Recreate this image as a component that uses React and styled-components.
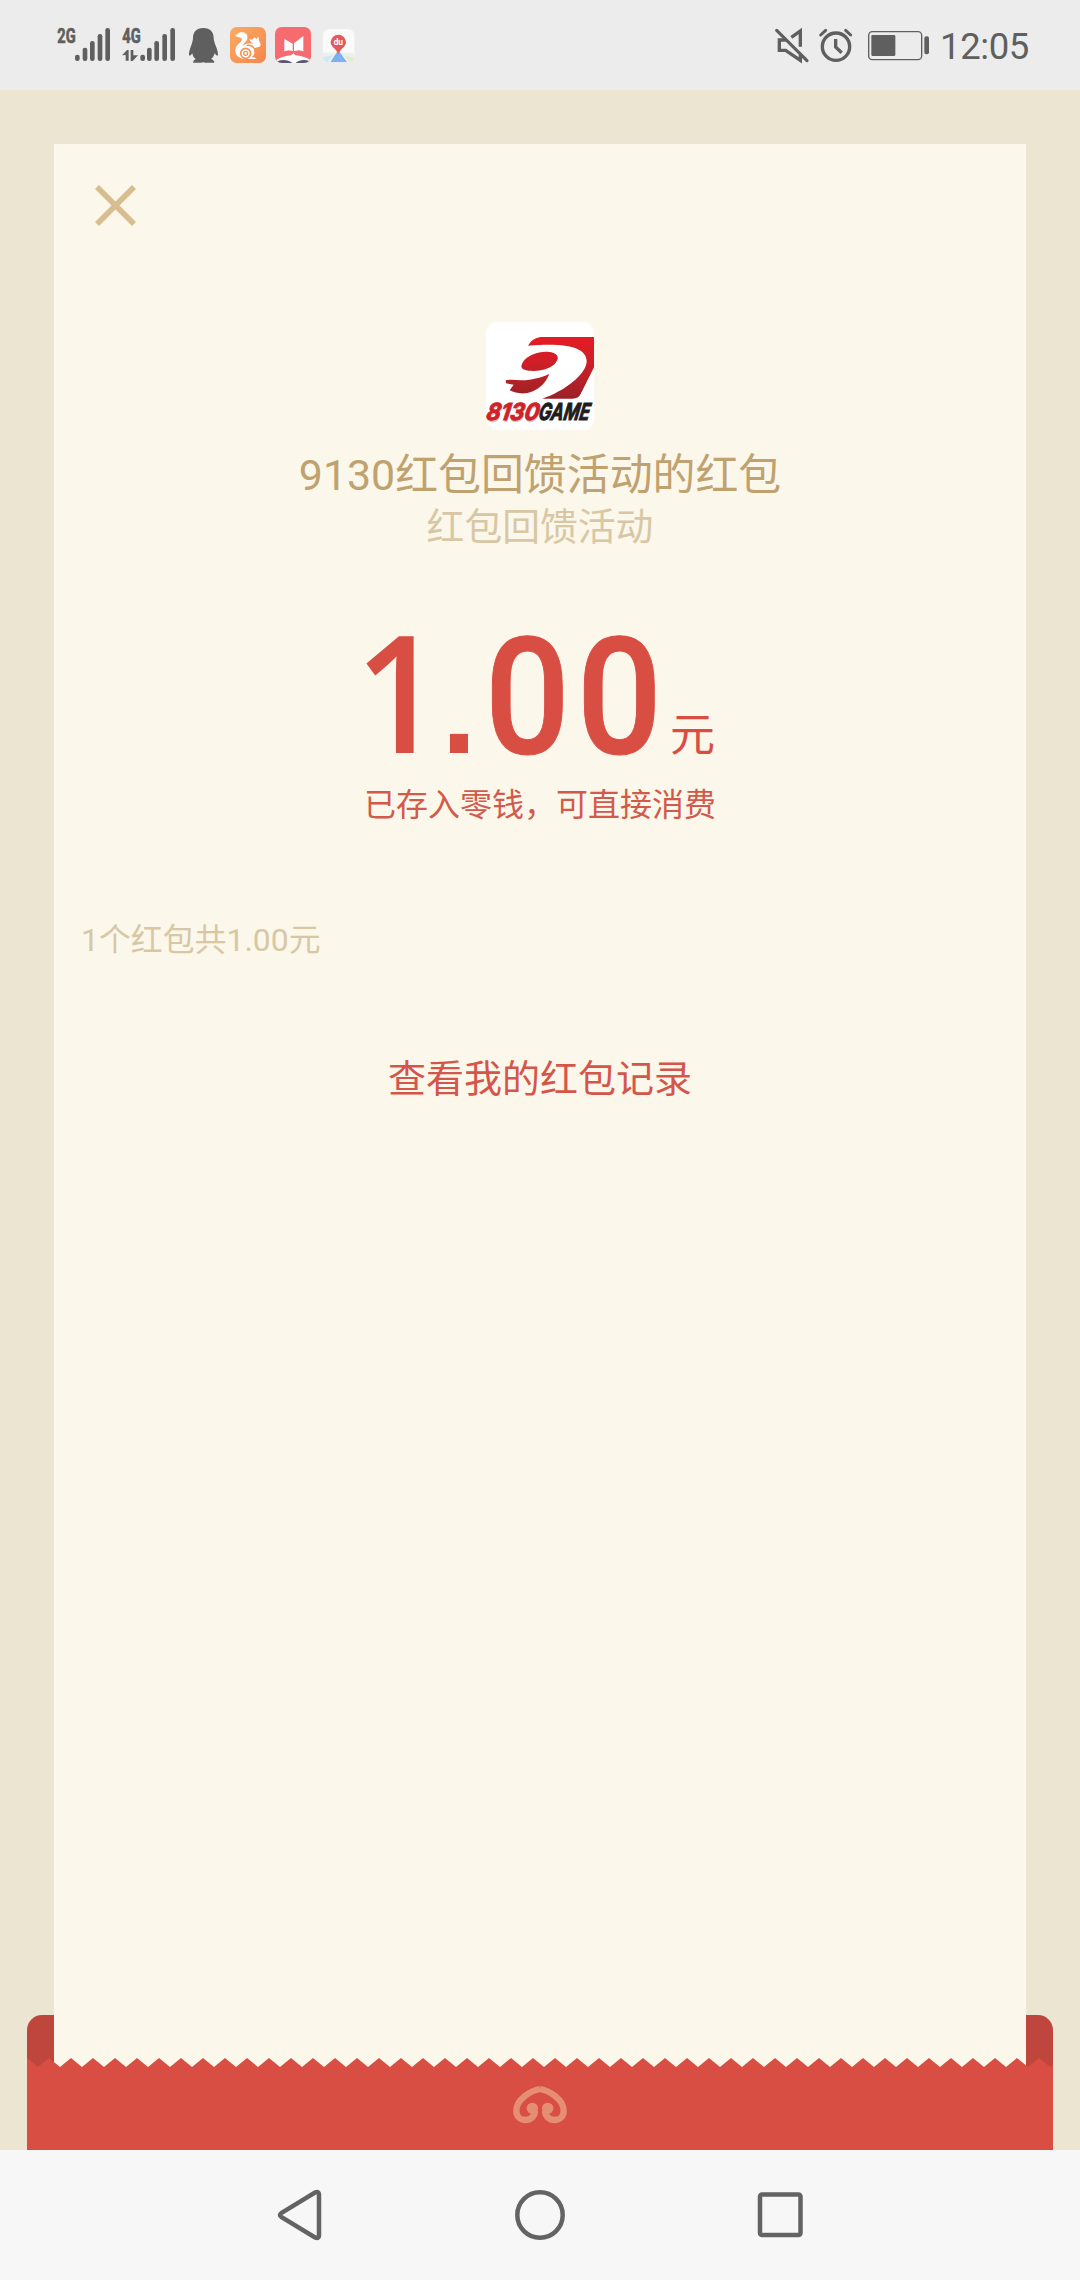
import styled, { createGlobalStyle } from 'styled-components';

const GlobalStyle = createGlobalStyle`
  * {
    box-sizing: border-box;
  }

  body {
    margin: 0;
    background: #ece5d2;
    font-family: Roboto, 'Noto Sans CJK SC', sans-serif;
  }

  svg {
    display: block;
    flex: none;
    overflow: visible;
  }
`;

const Screen = styled.div`
  display: flex;
  flex-direction: column;
  width: 1080px;
  height: 2280px;
  overflow: hidden;
`;

/* status bar */

const StatusBar = styled.header`
  display: flex;
  justify-content: space-between;
  height: 90px;
  padding: 27px 51px 0 56px;
  background: #ececec;
  color: #5f5f5f;
`;

const StatusGroup = styled.div`
  display: flex;
  align-items: flex-start;
  gap: ${({ gap }) => gap}px;
`;

const Clock = styled.span`
  margin-top: -2px;
  font-size: 36.5px;
  line-height: 43px;
  letter-spacing: -0.4px;
`;

/* envelope: the card sits between the back pocket and the front flap */

const Envelope = styled.main`
  flex: 1;
  display: grid;
  grid-template-columns: 27px 27px 1fr 27px 27px;
  grid-template-rows: 54px 1fr 43px 92px;
`;

const Pocket = styled.div`
  grid-column: 2 / 5;
  grid-row: 3 / 5;
  border-radius: 15px 15px 0 0;
  background: #bf463d;
`;

const Card = styled.section`
  grid-column: 3;
  grid-row: 2 / 5;
  display: flex;
  flex-direction: column;
  align-items: center;
  background: #fbf7ea;
`;

const TOOTH = 22;
const teeth = Array.from({ length: 95 }, (_, i) => {
  const x = (i * TOOTH) / 2;
  return `${x}px ${i % 2 ? 9 : 0}px`;
}).join(', ');

const Flap = styled.div`
  grid-column: 2 / 5;
  grid-row: 4;
  display: flex;
  justify-content: center;
  padding-top: 26px;
  background: #d94e43;
  clip-path: polygon(${teeth}, 100% 100%, 0 100%);
`;

const CloseButton = styled.button`
  align-self: flex-start;
  margin: 41px 0 0 41px;
  padding: 0;
  border: none;
  background: none;
  color: #d8bd90;
`;

const Avatar = styled.div`
  width: 108px;
  height: 108px;
  margin-top: 96px;
  border-radius: 11px;
  background: #fff;
`;

const Title = styled.h1`
  margin: 18px 0 0;
  color: #bfa270;
  font-size: 42.9px;
  font-weight: 400;
  line-height: 54px;
  white-space: nowrap;
`;

const Wishing = styled.p`
  margin: 0;
  color: #d8c7a5;
  font-size: 37.8px;
  line-height: 50px;
`;

const Amount = styled.div`
  display: flex;
  align-items: baseline;
  height: 160px;
  margin-top: 58px;
  color: #d94e43;
  line-height: 160px;
`;

const Glyph = styled.span`
  display: inline-block;
  width: ${({ width }) => width}px;
  margin-left: ${({ kern = 0 }) => kern}px;
  font-family: ${({ font = 'Roboto' }) => `'${font}'`}, sans-serif;
  font-size: ${({ size = 163 }) => size}px;
  font-weight: ${({ weight = 500 }) => weight};
  text-align: center;
  transform: scaleX(${({ stretch = 1 }) => stretch});
  transform-origin: ${({ origin = 'center' }) => origin};
  -webkit-text-stroke: ${({ outline = 0 }) => outline}px currentColor;
`;

const Unit = styled.span`
  margin-left: 5px;
  font-size: 45px;
  transform: translateY(-2px);
`;

const Deposit = styled.p`
  margin: 13px 0 0;
  color: #d25a4b;
  font-size: 32px;
  line-height: 44px;
`;

const Summary = styled.p`
  align-self: flex-start;
  margin: 91px 0 0 27px;
  color: #d8c7a5;
  font-size: 31.9px;
  line-height: 44px;
`;

const RecordsLink = styled.a`
  margin-top: 92px;
  color: #d4564a;
  font-size: 38px;
  line-height: 50px;
`;

const NavBar = styled.nav`
  display: flex;
  justify-content: center;
  align-items: center;
  gap: 190px;
  height: 130px;
  background: #f7f7f7;
  color: #636363;
`;

function Signal({ label, xs, arrows }) {
  const tops = [134, 113, 93, 72, 54];
  return (
    <svg width="56" height="36" viewBox="0 51 168 108" fill="currentColor">
      <text
        x="4"
        y="98"
        fontFamily="Roboto"
        fontWeight="700"
        fontSize="60"
        stroke="currentColor"
        strokeWidth="2"
        textLength="55"
        lengthAdjust="spacingAndGlyphs"
      >
        {label}
      </text>
      {xs.map((x, i) => (
        <rect key={x} x={x - 7} y={tops[i]} width="14" height={153 - tops[i]} rx="6.5" />
      ))}
      {arrows && <path d="M3 136 18 120h5v32h-9v-17zM29 120h8v16h14l-16 17h-6z" />}
    </svg>
  );
}

function QQ() {
  return (
    <svg width="35" height="36" viewBox="438 51 105 108" fill="currentColor">
      <path d="M490 54c-22 0-31 14-31 30 0 14-12 34-12 48 0 8 4 6 10-2 1 8 5 14 10 17q-8 3-8 11h25q6-3 12 0h27q0-8-10-11c5-3 9-9 11-17 6 8 10 10 10 2 0-14-13-34-13-48 0-16-9-30-31-30z" />
    </svg>
  );
}

function UCBrowser() {
  return (
    <svg width="36" height="36" viewBox="570 51 108 108">
      <defs>
        <linearGradient id="uc" x1="0" y1="0" x2="1" y2="1">
          <stop offset="0" stopColor="#fbaa62" />
          <stop offset="1" stopColor="#f5864f" />
        </linearGradient>
      </defs>
      <rect x="570" y="51" width="108" height="108" rx="20" fill="url(#uc)" />
      <path
        fill="#fff"
        d="M586 75c7 0 8-8 18-8 14 0 20 8 18 19-2 9-12 14-16 23 10-9 26-12 34-7-4-6-10-7-12-14 7 3 13 0 14-7l7 6 6-7c3 7 1 12 5 18 3 6 3 9-2 12-7 3-12 1-15 6-3 6 2 10-1 17-1 5-5 7-8 8q12 0 14 6h-30c-15 1-33-8-32-27 1-17 17-20 19-29 1-6-1-8-8-9-6-1-10-3-11-7z"
      />
      <circle cx="617" cy="130" r="15" fill="none" stroke="#f79255" strokeWidth="5" />
      <circle cx="617" cy="130" r="6" fill="none" stroke="#f79255" strokeWidth="4" />
      <path d="M620 106q18-2 24 12" fill="none" stroke="#f79255" strokeWidth="4" />
    </svg>
  );
}

function Reader() {
  return (
    <svg width="36" height="36" viewBox="705 51 108 108">
      <clipPath id="reader">
        <rect x="705" y="51" width="108" height="108" rx="20" />
      </clipPath>
      <g clipPath="url(#reader)">
        <path fill="#f56b70" d="M705 51h108v108H705z" />
        <path
          fill="#fff"
          d="M733 87l25 14v22l-12-2-13 3zM762 100l28-22v46l-12-3-16 2zM708 151c14-10 31-14 46-15l6-6 6 6c15 1 32 5 46 15l-12 10h-80z"
        />
        <path fill="#5d5872" d="M713 153c14-6 34-4 44 6h-40zM808 153c-14-6-32-4-41 6h38z" />
      </g>
    </svg>
  );
}

function BaiduMap() {
  return (
    <svg width="35" height="36" viewBox="840 51 105 108">
      <clipPath id="baidu">
        <rect x="848" y="57" width="96" height="100" rx="20" />
      </clipPath>
      <g clipPath="url(#baidu)">
        <path fill="#fafafa" d="M848 57h96v100h-96z" />
        <path fill="#eef0ee" d="M848 128h96v29h-96z" />
        <path fill="#cbe9f7" d="M848 141l30-5-15 21h-15z" />
        <path fill="#dcefc9" d="M913 136l31 8v13h-16z" />
        <path fill="#7db1f2" d="M891 126h8l22 31h-50z" />
        <path fill="#e25b59" d="M895 74a23 23 0 0 1 23 23c0 14-18 20-23 36-5-16-23-22-23-36a23 23 0 0 1 23-23z" />
        <text x="881" y="104" fontFamily="Roboto" fontWeight="700" fontSize="25" fill="#fff">
          du
        </text>
      </g>
    </svg>
  );
}

function Muted() {
  return (
    <svg width="34" height="36" viewBox="48 51 102 108" fill="none" stroke="currentColor">
      <path strokeWidth="10" d="M97 82l27-19v47M80 90H61v31h19l44 30v-17" />
      <path strokeWidth="9.5" strokeLinecap="round" d="M53 61l91 91" />
    </svg>
  );
}

function Alarm() {
  return (
    <svg width="39" height="36" viewBox="179 51 117 108" fill="none" stroke="currentColor">
      <circle cx="230" cy="110" r="41" strokeWidth="10" />
      <path strokeWidth="10" d="M229 87v24l18 17" />
      <path strokeWidth="9" strokeLinecap="round" d="M184 75l15-14M259 61l15 14" />
    </svg>
  );
}

function Battery() {
  return (
    <svg width="62" height="36" viewBox="326 51 186 108">
      <rect x="328" y="65" width="159" height="84" rx="11" fill="none" stroke="currentColor" strokeWidth="4" />
      <rect x="336" y="75" width="72" height="63" rx="4" fill="currentColor" />
      <rect x="495" y="79" width="14" height="54" rx="6" fill="currentColor" />
    </svg>
  );
}

function GameLogo() {
  return (
    <svg width="108" height="108" viewBox="48 36 324 324">
      <defs>
        <linearGradient id="red" gradientUnits="userSpaceOnUse" x1="0" y1="81" x2="0" y2="266">
          <stop offset="0" stopColor="#e51b24" />
          <stop offset="0.4" stopColor="#d01f27" />
          <stop offset="1" stopColor="#9a2226" />
        </linearGradient>
      </defs>
      <g fill="url(#red)">
        <path d="M174 107Q186 84 212 81H372V172L332 252Q325 266 308 266H217C285 243 350 192 350 153 350 112 288 97 174 107z" />
        <path d="M154 169C158 142 195 125 232 125 254 125 268 136 262 150 252 173 220 183 190 183 168 183 155 179 154 169z" />
        <path d="M107 211C125 207 150 213 178 209 205 205 222 199 238 192 226 222 202 243 172 249 152 252 134 249 119 241L131 224 108 220z" />
      </g>
      <g
        fontFamily="Inter"
        fontWeight="700"
        fontStyle="italic"
        fontSize="70"
        strokeWidth="3"
        transform="translate(56) skewX(-10)"
      >
        <text x="52" y="336" fill="#cfcfcf" textLength="156" lengthAdjust="spacingAndGlyphs">
          8130
        </text>
        <text x="49" y="331" fill="#cf2229" stroke="#cf2229" textLength="158" lengthAdjust="spacingAndGlyphs">
          8130
        </text>
        <text x="206" y="331" fill="#1d1d1d" stroke="#1d1d1d" textLength="153" lengthAdjust="spacingAndGlyphs">
          GAME
        </text>
      </g>
    </svg>
  );
}

function Curl() {
  const half = 'M180 147C152 152 109 178 109 212 109 231 122 240 136 240 152 240 165 228 165 212';
  return (
    <svg width="56" height="40" viewBox="96 132 168 120" fill="none" stroke="#e68e73" strokeWidth="19">
      {[undefined, 'matrix(-1 0 0 1 360 0)'].map((transform, i) => (
        <g key={i} transform={transform}>
          <path d={half} strokeLinejoin="round" />
          <circle cx="157" cy="205" r="17" fill="#e68e73" stroke="none" />
        </g>
      ))}
    </svg>
  );
}

export default function App() {
  return (
    <Screen>
      <GlobalStyle />
      <StatusBar>
        <StatusGroup gap={9}>
          <Signal label="2G" xs={[64, 87, 109, 132, 155]} />
          <Signal label="4G" xs={[65, 85, 107, 131, 155]} arrows />
          <QQ />
          <UCBrowser />
          <Reader />
          <BaiduMap />
        </StatusGroup>
        <StatusGroup gap={10}>
          <Muted />
          <Alarm />
          <Battery />
          <Clock>12:05</Clock>
        </StatusGroup>
      </StatusBar>

      <Envelope>
        <Pocket />
        <Card>
          <CloseButton aria-label="关闭">
            <svg width="41" height="41" viewBox="0 0 41 41" stroke="currentColor" strokeWidth="5.6">
              <path d="M2 2l37 37M39 2L2 39" />
            </svg>
          </CloseButton>
          <Avatar>
            <GameLogo />
          </Avatar>
          <Title>9130红包回馈活动的红包</Title>
          <Wishing>红包回馈活动</Wishing>
          <Amount>
            <Glyph font="Open Sans" weight={600} width={82} kern={-10} stretch={0.94} origin="left">
              1
            </Glyph>
            <Glyph font="Liberation Sans" weight={700} size={128} width={44}>
              .
            </Glyph>
            <Glyph width={92} stretch={0.92} outline={1}>
              0
            </Glyph>
            <Glyph width={92} stretch={0.92} outline={1}>
              0
            </Glyph>
            <Unit>元</Unit>
          </Amount>
          <Deposit>已存入零钱，可直接消费</Deposit>
          <Summary>1个红包共1.00元</Summary>
          <RecordsLink>查看我的红包记录</RecordsLink>
        </Card>
        <Flap>
          <Curl />
        </Flap>
      </Envelope>

      <NavBar>
        <svg width="48" height="50" viewBox="-1 0 48 50" fill="none" stroke="currentColor" strokeWidth="4.5">
          <path d="M3.2 23.2 37 2.6q4-1.6 4 2v40.8q0 3.6-4 2L3.2 26.8q-2.4-1.8 0-3.6z" />
        </svg>
        <svg width="50" height="50" viewBox="0 0 50 50" fill="none" stroke="currentColor" strokeWidth="4.5">
          <circle cx="25" cy="25" r="22.7" />
        </svg>
        <svg width="48" height="50" viewBox="0 0 48 50" fill="none" stroke="currentColor" strokeWidth="4.5">
          <rect x="5" y="4.5" width="40.5" height="40.5" rx="2" />
        </svg>
      </NavBar>
    </Screen>
  );
}
